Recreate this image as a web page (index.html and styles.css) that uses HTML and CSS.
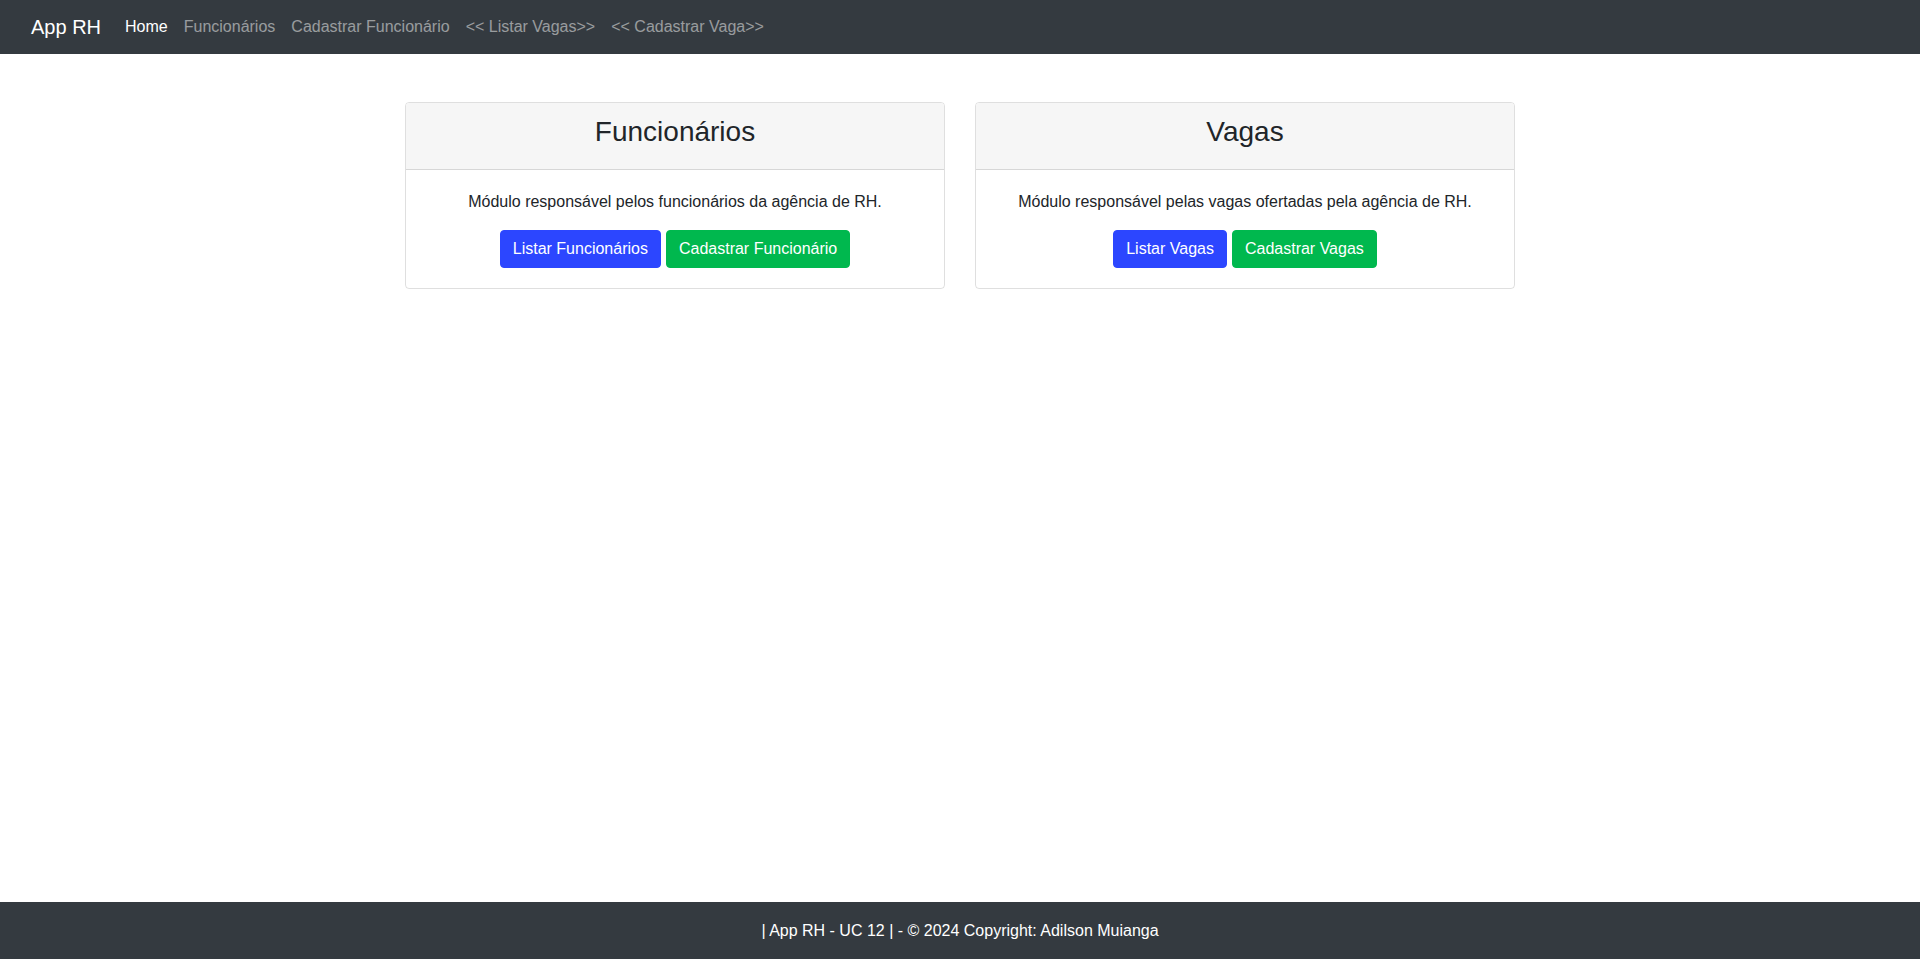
FILE: index.html
```html
<!DOCTYPE html>
<html lang="pt-br">
<head>
<meta charset="utf-8">
<title>App RH</title>
<link rel="stylesheet" href="styles.css">
</head>
<body>
<nav class="navbar">
  <a class="brand" href="#">App RH</a>
  <ul class="nav">
    <li><a class="nav-link active" href="#">Home</a></li>
    <li><a class="nav-link" href="#">Funcionários</a></li>
    <li><a class="nav-link" href="#">Cadastrar Funcionário</a></li>
    <li><a class="nav-link" href="#">&lt;&lt; Listar Vagas&gt;&gt;</a></li>
    <li><a class="nav-link" href="#">&lt;&lt; Cadastrar Vaga&gt;&gt;</a></li>
  </ul>
</nav>
<main class="container">
  <div class="row">
    <section class="card">
      <header class="card-header"><h3>Funcionários</h3></header>
      <div class="card-body">
        <p>Módulo responsável pelos funcionários da agência de RH.</p>
        <div class="actions">
          <a class="btn btn-blue" href="#">Listar Funcionários</a>
          <a class="btn btn-green" href="#">Cadastrar Funcionário</a>
        </div>
      </div>
    </section>
    <section class="card">
      <header class="card-header"><h3>Vagas</h3></header>
      <div class="card-body">
        <p>Módulo responsável pelas vagas ofertadas pela agência de RH.</p>
        <div class="actions">
          <a class="btn btn-blue" href="#">Listar Vagas</a>
          <a class="btn btn-green" href="#">Cadastrar Vagas</a>
        </div>
      </div>
    </section>
  </div>
</main>
<footer class="footer">| App RH - UC 12 | - © 2024 Copyright: Adilson Muianga</footer>
</body>
</html>
```
FILE: styles.css
```css
* { box-sizing: border-box; }
html, body { margin: 0; padding: 0; }
body {
  font-family: "Liberation Sans", Arial, sans-serif;
  font-size: 16px;
  line-height: 1.5;
  color: #212529;
  background: #fff;
  min-height: 100vh;
  display: flex;
  flex-direction: column;
}
a { text-decoration: none; }

.navbar {
  background: #343a40;
  height: 54px;
  display: flex;
  align-items: center;
  padding: 0 31px;
}
.brand {
  color: #fff;
  font-size: 20px;
  line-height: 30px;
  margin-right: 16px;
}
.nav {
  list-style: none;
  margin: 0;
  padding: 0;
  display: flex;
}
.nav-link {
  display: block;
  padding: 8px;
  color: rgba(255, 255, 255, 0.5);
  font-size: 16px;
  line-height: 24px;
}
.nav-link.active { color: #fff; }

.container {
  width: 1140px;
  margin: 0 auto;
  padding: 48px 15px 0;
}
.row {
  display: flex;
  gap: 30px;
}
.card {
  flex: 1;
  border: 1px solid rgba(0, 0, 0, 0.125);
  border-radius: 4px;
  text-align: center;
  overflow: hidden;
}
.card-header {
  background: #f6f6f6;
  border-bottom: 1px solid rgba(0, 0, 0, 0.125);
  padding: 12px 20px 20px;
}
.card-header h3 {
  margin: 0;
  font-size: 28px;
  font-weight: 400;
  line-height: 1.2;
}
.card-body {
  padding: 20px;
}
.card-body p {
  margin: 0 0 16px;
}
.actions {
  display: flex;
  justify-content: center;
  gap: 5px;
}
.btn {
  display: inline-block;
  color: #fff;
  padding: 6px 12px;
  line-height: 24px;
  border: 1px solid transparent;
  border-radius: 4px;
  font-size: 16px;
}
.btn-blue { background: #2c46ff; border-color: #2c46ff; }
.btn-green { background: #00b84e; border-color: #00b84e; }

.footer {
  margin-top: auto;
  background: #343a40;
  color: #fff;
  text-align: center;
  height: 57px;
  line-height: 57px;
}
```
